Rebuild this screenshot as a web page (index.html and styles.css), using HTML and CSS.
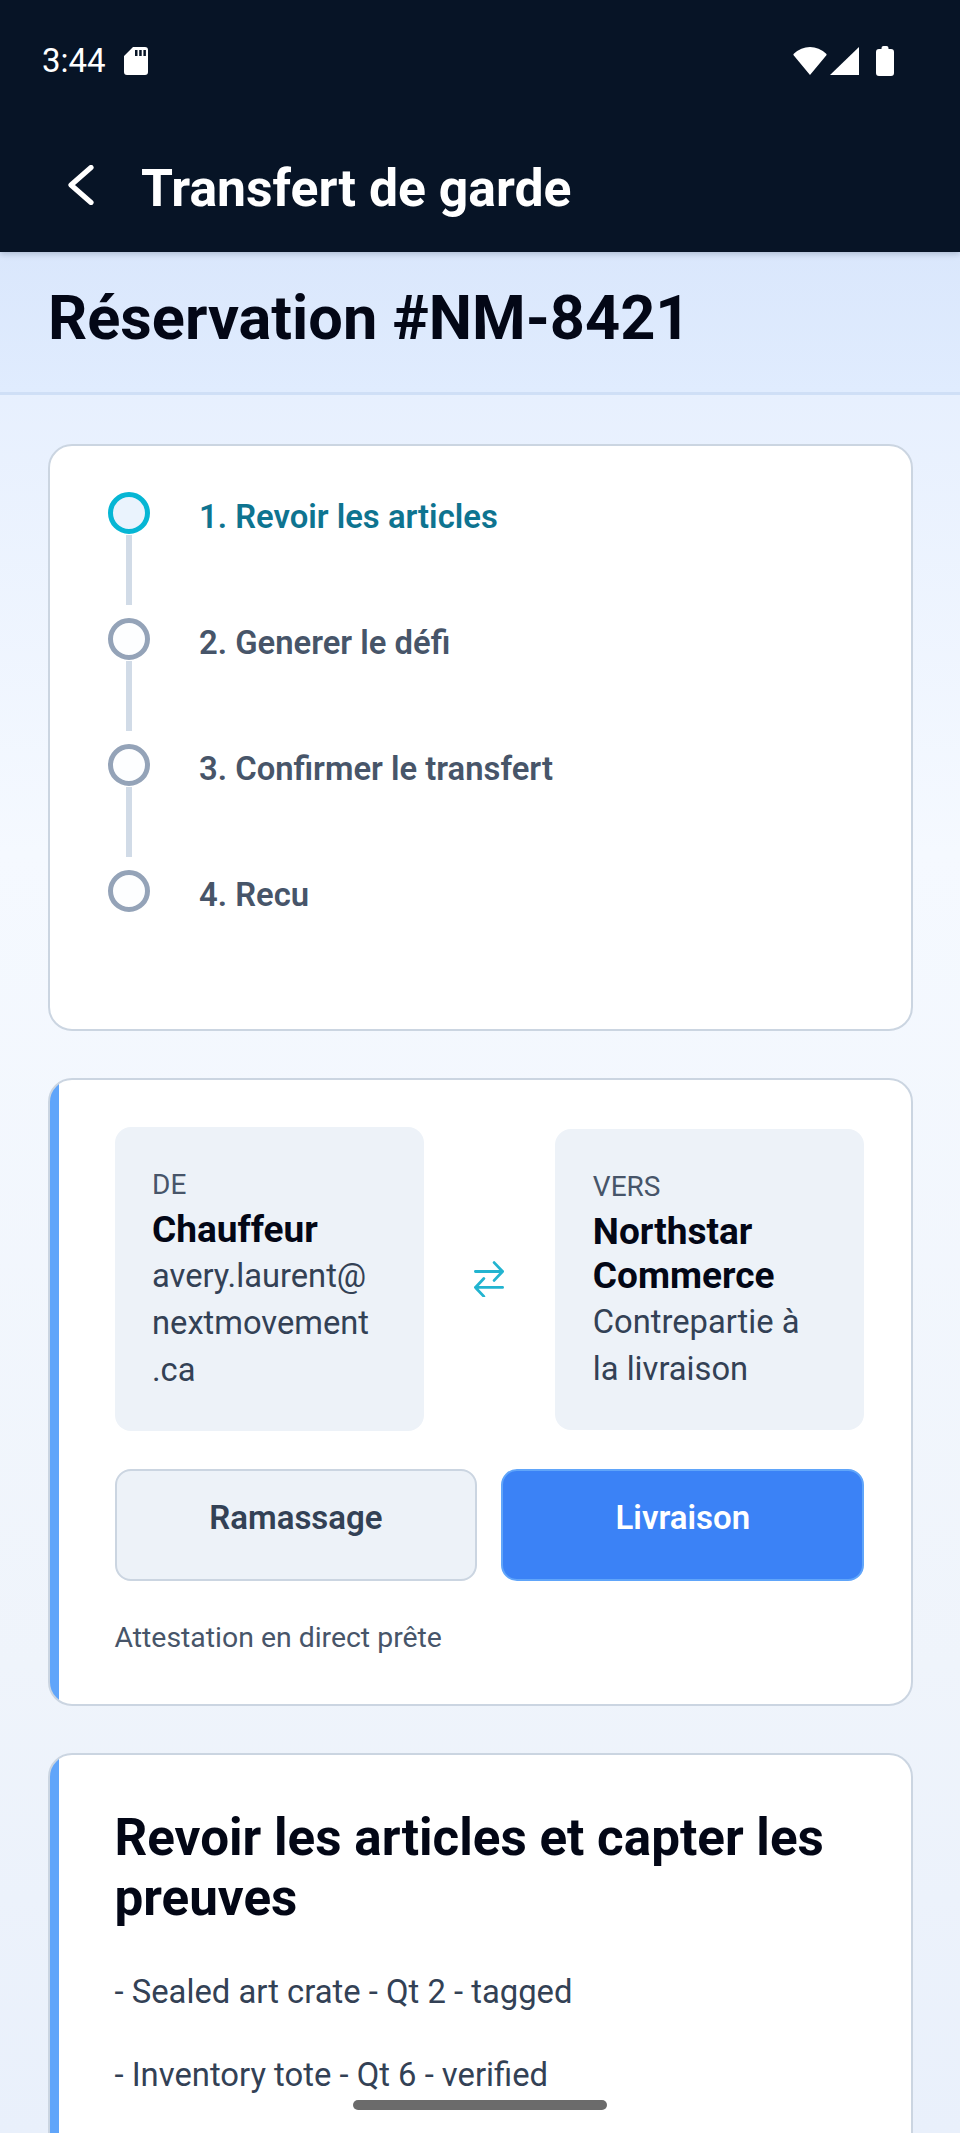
FILE: index.html
```html
<!DOCTYPE html>
<html lang="fr">
<head>
<meta charset="utf-8">
<title>Transfert de garde</title>
<link rel="stylesheet" href="styles.css">
</head>
<body>
<div class="screen">
  <header class="topbar">
    <div class="status">
      <div class="status-left">
        <span class="clock">3:44</span>
        <svg class="sd" viewBox="0 0 24 28" width="24" height="28"><path fill="#fff" fill-rule="evenodd" d="M9 0h12a3 3 0 0 1 3 3v22a3 3 0 0 1-3 3H3a3 3 0 0 1-3-3V9zM11 3v6h2.500V3zM15.200 3v6h2.500V3zM19.400 3v6h2.500V3z"/></svg>
      </div>
      <div class="status-right">
        <svg viewBox="0 0 34 28" width="34" height="28"><path fill="#fff" d="M17 28 0.600 8.200Q0 7.400 0.800 6.800Q8 0 17 0T33.200 6.800Q34 7.400 33.400 8.200z"/></svg>
        <svg viewBox="0 0 29 28" width="29" height="28"><path fill="#fff" d="M29 0V28H0z"/></svg>
        <svg class="battery" viewBox="0 0 18 30" width="18" height="30"><path fill="#fff" d="M5.500 2a2 2 0 0 1 2-2h3a2 2 0 0 1 2 2v1h2.500a3 3 0 0 1 3 3v21a3 3 0 0 1-3 3H3a3 3 0 0 1-3-3V6a3 3 0 0 1 3-3h2.500z"/></svg>
      </div>
    </div>
    <div class="appbar">
      <svg class="back" viewBox="0 0 26 40" width="26" height="40"><path fill="none" stroke="#fff" stroke-width="5.200" stroke-linecap="round" stroke-linejoin="round" d="M23 2.500 3 20l20 17.500"/></svg>
      <h1 class="appbar-title">Transfert de garde</h1>
    </div>
  </header>

  <section class="booking">
    <h2 class="booking-title">Réservation #NM-8421</h2>
  </section>

  <main class="content">
    <section class="card stepper">
      <div class="step step-active">
        <div class="rail"><span class="dot"></span><span class="line"></span></div>
        <span class="step-label">1. Revoir les articles</span>
      </div>
      <div class="step">
        <div class="rail"><span class="dot"></span><span class="line"></span></div>
        <span class="step-label">2. Generer le défi</span>
      </div>
      <div class="step">
        <div class="rail"><span class="dot"></span><span class="line"></span></div>
        <span class="step-label">3. Confirmer le transfert</span>
      </div>
      <div class="step step-last">
        <div class="rail"><span class="dot"></span></div>
        <span class="step-label">4. Recu</span>
      </div>
    </section>

    <section class="card card-accent">
      <div class="parties">
        <div class="party">
          <span class="party-role">DE</span>
          <span class="party-name">Chauffeur</span>
          <span class="party-detail">avery.laurent@<br>nextmovement<br>.ca</span>
        </div>
        <svg class="swap" viewBox="0 0 32 38" width="30" height="36"><path fill="none" stroke="#22b4d0" stroke-width="3" stroke-linecap="round" stroke-linejoin="round" d="M1.500 11h29M21.500 1.500l9 9.500-9 9.500M30.500 28h-29M10.500 18.500l-9 9.500 9 9.500"/></svg>
        <div class="party">
          <span class="party-role">VERS</span>
          <span class="party-name">Northstar Commerce</span>
          <span class="party-detail">Contrepartie à<br>la livraison</span>
        </div>
      </div>
      <div class="modes">
        <div class="mode">Ramassage</div>
        <div class="mode mode-on">Livraison</div>
      </div>
      <p class="note">Attestation en direct prête</p>
    </section>

    <section class="card card-accent review">
      <h3 class="review-title">Revoir les articles et capter les preuves</h3>
      <p class="item">- Sealed art crate - Qt 2 - tagged</p>
      <p class="item">- Inventory tote - Qt 6 - verified</p>
    </section>
  </main>

  <div class="home-bar"></div>
</div>
</body>
</html>
```

FILE: styles.css
```css
* { box-sizing: border-box; }

html, body { margin: 0; padding: 0; }

body {
  font-family: Roboto, "Liberation Sans", sans-serif;
  color: #0b1324;
}

.screen {
  position: relative;
  width: 960px;
  height: 2133px;
  overflow: hidden;
  background: linear-gradient(180deg, #dbe8fd 0, #f5f9ff 40%, #eff4fb 78%, #e9f0fb 100%);
}

/* dark header with system status row and app bar */
.topbar {
  height: 252px;
  background: #071426;
  box-shadow: 0 2px 6px rgba(15, 30, 60, .22);
  position: relative;
}

.status {
  height: 120px;
  padding: 46px 66px 0 42px;
  display: flex;
  justify-content: space-between;
  align-items: flex-start;
}

.status-left, .status-right { display: flex; align-items: center; }

.status-left { gap: 18px; height: 30px; }

.status-right { gap: 3px; height: 30px; }

.status-right .battery { margin-left: 14px; }

.clock {
  color: #fff;
  font-size: 33px;
  line-height: 30px;
}

.appbar {
  display: flex;
  align-items: center;
  padding: 39px 0 0 68px;
  gap: 47px;
}

.back { position: relative; top: -4px; }

.appbar-title {
  margin: 0;
  color: #fff;
  font-size: 51.700px;
  line-height: 60px;
  font-weight: 700;
}

/* booking reference strip */
.booking {
  height: 143px;
  padding: 28px 48px 0;
  background: linear-gradient(180deg, #dae7fc, #e0ecfe);
  border-bottom: 3px solid #cfdff6;
}

.booking-title {
  margin: 0;
  font-size: 61.300px;
  line-height: 76px;
  font-weight: 700;
  color: #030716;
}

.content {
  padding: 49px 47px 0 48px;
  display: flex;
  flex-direction: column;
  gap: 47px;
}

.card {
  background: #fff;
  border: 2.670px solid #cbd5e1;
  border-radius: 24px;
}

/* cards with a straight blue bar on their left edge */
.card-accent {
  background: linear-gradient(90deg, #60a5fa 9px, #fff 9px);
  padding: 47px 46.700px 0 64.500px;
}

/* vertical progress steps */
.stepper {
  height: 587px;
  padding: 46px 0 0 58px;
}

.step {
  display: flex;
  height: 126px;
  gap: 49px;
}

.rail {
  width: 42px;
  display: flex;
  flex-direction: column;
  align-items: center;
}

.dot {
  flex: none;
  width: 42px;
  height: 42px;
  border-radius: 50%;
  border: 5.300px solid #94a3b8;
  background: #fdfeff;
}

.line {
  flex: none;
  width: 5.300px;
  height: 70px;
  margin-top: 1px;
  background: #d1dbe7;
}

.step-label {
  font-size: 32.800px;
  line-height: 42px;
  font-weight: 600;
  color: #475569;
  padding-top: 4px;
}

.step-active .dot {
  border-color: #06b6d4;
  background: #eaf3fd;
}

.step-active .step-label { color: #0e7490; }

/* from / to summary */
.parties {
  display: grid;
  grid-template-columns: 309px 1fr 309px;
  align-items: center;
  justify-items: center;
}

.party {
  justify-self: stretch;
  display: flex;
  flex-direction: column;
  background: #edf2f8;
  border-radius: 16px;
  padding: 40px 20px 37px 37.500px;
}

.party-role {
  font-size: 28px;
  line-height: 36px;
  color: #475569;
}

.party-name {
  font-size: 37px;
  line-height: 44px;
  font-weight: 700;
  color: #030716;
  margin: 5px 0 1px;
}

.party-detail {
  font-size: 32.700px;
  line-height: 47px;
  color: #334155;
}

.swap { display: block; }

.modes {
  display: flex;
  gap: 24px;
  margin-top: 38px;
}

.mode {
  flex: 1;
  height: 112px;
  padding-top: 26px;
  text-align: center;
  font-size: 33px;
  line-height: 42px;
  font-weight: 600;
  color: #334155;
  background: #edf2f8;
  border: 2.670px solid #cbd5e1;
  border-radius: 16px;
}

.mode-on {
  color: #fff;
  background: #3b82f6;
  border-color: #60a5fa;
}

.note {
  margin: 38px 0 0;
  font-size: 28.400px;
  line-height: 38px;
  color: #475569;
  padding-bottom: 47px;
}

.review { padding-top: 53px; padding-bottom: 200px; }

.review-title {
  margin: 0 0 41px;
  font-size: 51.200px;
  line-height: 60px;
  font-weight: 700;
  color: #030716;
}

.item {
  margin: 0 0 37px;
  font-size: 32.800px;
  line-height: 46px;
  color: #334155;
}

/* gesture handle over the page */
.home-bar {
  position: absolute;
  left: 353px;
  top: 2100px;
  width: 254px;
  height: 10px;
  border-radius: 5px;
  background: #6b6b6b;
}
```
